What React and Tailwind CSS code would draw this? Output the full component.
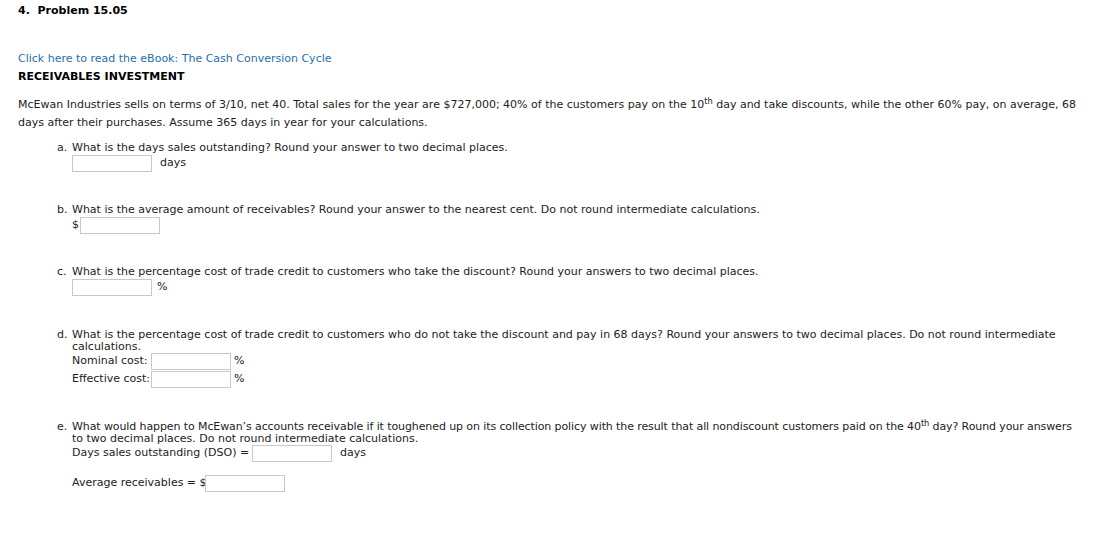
import React from "react";

function Box({ className = "" }) {
  return (
    <span
      className={`inline-block h-[17px] w-[80px] shrink-0 border border-[#c8c8c8] bg-white ${className}`}
    />
  );
}

function Question({ letter, children, className = "" }) {
  return (
    <div className={`flex pl-[39px] ${className}`}>
      <span className="w-[15px] shrink-0 leading-[12px]">{letter}</span>
      <div className="flex-1">{children}</div>
    </div>
  );
}

export default function App() {
  return (
    <div
      className="min-h-[536px] bg-white px-[18px] pt-[4px] text-[11px] text-[#222]"
      style={{ fontFamily: '"DejaVu Sans", Verdana, sans-serif' }}
    >
      <div className="whitespace-pre font-bold leading-[14px] text-black">4.  Problem 15.05</div>

      <div className="mt-[32px] leading-[18px]">
        <a href="#" className="text-[#1f6fae]">
          Click here to read the eBook: The Cash Conversion Cycle
        </a>
      </div>
      <div className="font-bold leading-[18px] text-black">RECEIVABLES INVESTMENT</div>

      <p className="mt-[10px] leading-[18px]">
        <span className="whitespace-nowrap">
          McEwan Industries sells on terms of 3/10, net 40. Total sales for the year are $727,000; 40% of the
          customers pay on the 10<sup>th</sup> day and take discounts, while the other 60% pay, on average, 68
        </span>
        <br />
        days after their purchases. Assume 365 days in year for your calculations.
      </p>

      <Question letter="a." className="mt-[10px]">
        <div className="leading-[12px]">
          What is the days sales outstanding? Round your answer to two decimal places.
        </div>
        <div className="mt-[1px] flex items-center">
          <Box />
          <span className="ml-[8px]">days</span>
        </div>
      </Question>

      <Question letter="b." className="mt-[32px]">
        <div className="leading-[12px]">
          What is the average amount of receivables? Round your answer to the nearest cent. Do not round
          intermediate calculations.
        </div>
        <div className="mt-[1px] flex items-center">
          <span className="w-[8px]">$</span>
          <Box />
        </div>
      </Question>

      <Question letter="c." className="mt-[32px]">
        <div className="leading-[12px]">
          What is the percentage cost of trade credit to customers who take the discount? Round your answers
          to two decimal places.
        </div>
        <div className="mt-[1px] flex items-center">
          <Box />
          <span className="ml-[5px]">%</span>
        </div>
      </Question>

      <Question letter="d." className="mt-[33px]">
        <div className="leading-[12px]">
          <span className="whitespace-nowrap">
            What is the percentage cost of trade credit to customers who do not take the discount and pay in 68
            days? Round your answers to two decimal places. Do not round intermediate
          </span>
          <br />
          calculations.
        </div>
        <div className="flex items-center">
          <span className="w-[79px] whitespace-nowrap">Nominal cost:</span>
          <Box />
          <span className="ml-[3px]">%</span>
        </div>
        <div className="mt-[1px] flex items-center">
          <span className="w-[79px] whitespace-nowrap">Effective cost:</span>
          <Box />
          <span className="ml-[3px]">%</span>
        </div>
      </Question>

      <Question letter="e." className="mt-[33px]">
        <div className="leading-[12px]">
          <span className="whitespace-nowrap tracking-[-0.1px]">
            What would happen to McEwan’s accounts receivable if it toughened up on its collection policy with
            the result that all nondiscount customers paid on the 40<sup>th</sup> day? Round your answers
          </span>
          <br />
          to two decimal places. Do not round intermediate calculations.
        </div>
        <div className="flex items-center">
          <span className="w-[180px] whitespace-nowrap">Days sales outstanding (DSO) =</span>
          <Box />
          <span className="ml-[8px]">days</span>
        </div>
        <div className="mt-[13px] flex items-center">
          <span className="w-[133px] whitespace-nowrap">Average receivables = $</span>
          <Box />
        </div>
      </Question>
    </div>
  );
}
